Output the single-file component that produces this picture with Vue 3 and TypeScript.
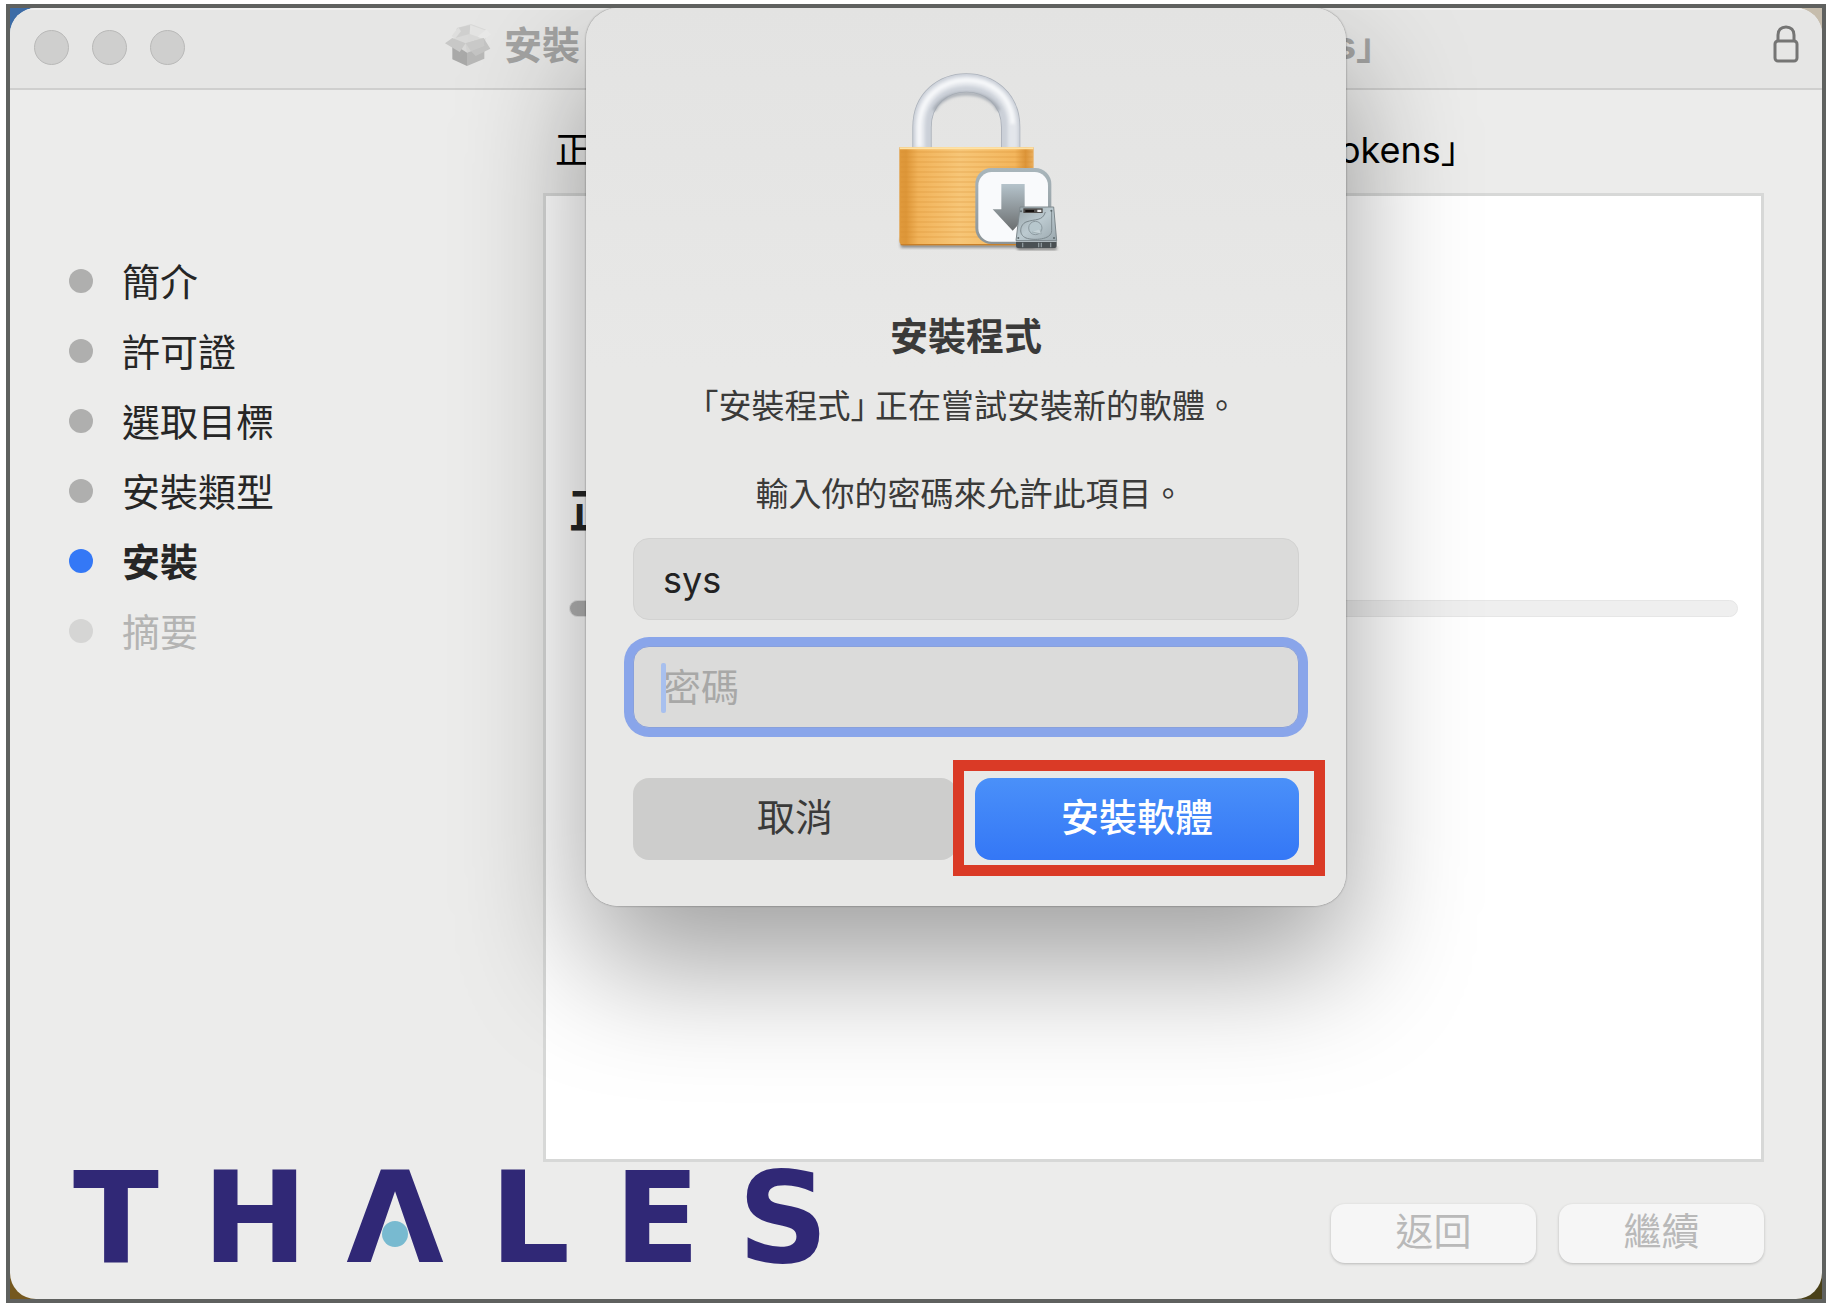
<script setup lang="ts">
import { ref } from 'vue'

type StepState = 'done' | 'current' | 'pending'
interface Step {
  label: string
  state: StepState
}

const steps: Step[] = [
  { label: '簡介', state: 'done' },
  { label: '許可證', state: 'done' },
  { label: '選取目標', state: 'done' },
  { label: '安裝類型', state: 'done' },
  { label: '安裝', state: 'current' },
  { label: '摘要', state: 'pending' },
]

const user = ref('sys')
const password = ref('')
const progress = ref(12)
// horizontal grain of the brass padlock body
const grain = Array.from({ length: 18 }, (_, i) => 306 + i * 15)
</script>

<template>
  <div class="desktop">
    <div class="window">
      <header class="titlebar">
        <div class="lights">
          <button type="button" aria-label="關閉"></button>
          <button type="button" aria-label="縮到最小"></button>
          <button type="button" aria-label="縮放"></button>
        </div>
        <div class="title">
          <svg class="box" viewBox="0 0 138 126" aria-hidden="true">
            <path d="M22 62 L66 80 L66 126 L22 106 Z" fill="#a9a9a8" />
            <path d="M66 80 L118 60 L118 104 L66 126 Z" fill="#b8b8b7" />
            <path d="M36 12 L78 0 L126 18 L118 66 L66 86 L22 58 Z" fill="#d9d9d8" />
            <path d="M36 12 L76 3 L74 30 L30 42 Z" fill="#cfcfce" />
            <path d="M76 3 L124 20 L116 44 L74 30 Z" fill="#e4e4e3" />
            <path d="M20 36 L40 10 L48 22 L30 44 Z" fill="#dededd" />
            <path d="M124 16 L138 32 L116 46 L98 38 Z" fill="#e9e9e8" />
            <path d="M22 42 L62 58 L44 84 L0 58 Z" fill="#c8c8c7" />
            <path d="M62 58 L116 42 L136 74 L92 96 L78 82 Z" fill="#c4c4c3" />
            <path d="M62 58 L116 42 L118 66 L66 86 Z" fill="#cececd" opacity=".6" />
          </svg>
          <span>安裝</span>
          <span class="tail">Tokens<span class="half">」</span></span>
        </div>
        <svg class="padlock" viewBox="0 0 26 38" fill="none" stroke="#757574" stroke-width="3" aria-hidden="true">
          <rect x="2" y="16" width="22" height="20" rx="3" />
          <path d="M5 16 V10 C5 5 8 2 13 2 C18 2 21 5 21 10 V16" />
        </svg>
      </header>

      <main class="body">
        <nav class="sidebar">
          <ol>
            <li v-for="s in steps" :key="s.label" :class="s.state">
              <i></i><span>{{ s.label }}</span>
            </li>
          </ol>
        </nav>
        <section class="content">
          <h1><span>正在安裝</span><span>Tokens<span class="half">」</span></span></h1>
          <div class="panel">
            <h2>正在</h2>
            <div class="track" role="progressbar" :aria-valuenow="progress">
              <div class="fill" :style="{ width: progress + '%' }"></div>
            </div>
          </div>
        </section>
      </main>

      <footer class="footer">
        <div class="brand">
          <span>T</span><span>H</span><span class="peak">Λ</span><span>L</span><span>E</span><span>S</span>
        </div>
        <div class="nav-buttons">
          <button type="button" disabled>返回</button>
          <button type="button" disabled>繼續</button>
        </div>
      </footer>

      <form class="dialog" role="dialog" aria-labelledby="dlg-title" @submit.prevent>
        <svg class="lock" viewBox="18 48 600 570" aria-hidden="true">
          <defs>
            <linearGradient id="brass" x1="0" x2="1" y1="0" y2="0">
              <stop offset="0" stop-color="#e09a3c" />
              <stop offset=".05" stop-color="#dd9638" />
              <stop offset=".14" stop-color="#f1b35a" />
              <stop offset=".45" stop-color="#f7c677" />
              <stop offset=".86" stop-color="#f3b65d" />
              <stop offset=".94" stop-color="#dc9438" />
              <stop offset="1" stop-color="#eab060" />
            </linearGradient>
            <linearGradient id="arrow" x1="0" x2="0" y1="0" y2="1">
              <stop offset="0" stop-color="#b5c3cb" />
              <stop offset="1" stop-color="#6b6e6f" />
            </linearGradient>
            <linearGradient id="tile" x1="0" x2="0" y1="0" y2="1">
              <stop offset="0" stop-color="#a9b6bc" />
              <stop offset="1" stop-color="#8c9497" />
            </linearGradient>
            <linearGradient id="disk" x1="0" x2="1" y1="0" y2="1">
              <stop offset="0" stop-color="#98a4a9" />
              <stop offset=".5" stop-color="#bccad0" />
              <stop offset="1" stop-color="#9aa7ad" />
            </linearGradient>
            <filter id="soft" x="-20%" y="-20%" width="140%" height="140%">
              <feGaussianBlur stdDeviation="5" />
            </filter>
          </defs>
          <rect x="122" y="565" width="400" height="28" fill="#000" opacity=".4" filter="url(#soft)" />
          <g fill="none">
            <path d="M186 296 V232 C186 54 452 54 452 232 V296" stroke="#a9afb8" stroke-width="58" />
            <path d="M186 296 V232 C186 54 452 54 452 232 V296" stroke="#cbd0d8" stroke-width="53" />
            <path d="M180 296 V228 C182 48 456 48 458 228 V296" stroke="#e3e6eb" stroke-width="30" filter="url(#soft)" />
            <path d="M178 290 V228 C184 46 454 46 458 222" stroke="#f8f9fb" stroke-width="12" filter="url(#soft)" />
            <path d="M222 182 C250 114 388 114 416 182" stroke="#a3a9b1" stroke-width="10" filter="url(#soft)" />
          </g>
          <path d="M118 292 H521 V586 H136 Q118 586 118 572 Z" fill="url(#brass)" />
          <path v-for="y in grain" :key="y" :d="`M122 ${y} H518`" stroke="#d58c30" stroke-width="3" opacity=".4" />
          <path d="M119 295 H520" stroke="#ffe3a6" stroke-width="6" />
          <path d="M122 584 H521" stroke="#c87f28" stroke-width="4" />
          <rect x="346" y="354" width="228" height="228" rx="48" fill="url(#tile)" />
          <rect x="355" y="366" width="209" height="209" rx="40" fill="#f9fafc" />
          <path d="M424 402 H494 V478 H518 L458 542 L398 478 H424 Z" fill="url(#arrow)" />
          <path d="M470 590 H590 V600 H474 Z" fill="#000" opacity=".45" filter="url(#soft)" />
          <path d="M480 471 H581 L590 572 H468 Z" fill="url(#disk)" stroke="#7e888c" stroke-width="3" />
          <path d="M468 572 H590 V588 Q590 594 584 594 H474 Q468 594 468 588 Z" fill="#4a5053" />
          <path d="M468 574 H590" stroke="#c4cfd4" stroke-width="3" />
          <path d="M488 578 V592 M536 578 V592 M544 578 V592 M572 578 V592" stroke="#8d979b" stroke-width="4" />
          <rect x="490" y="475" width="58" height="14" fill="#4d4a48" />
          <path d="M496 483 H522" stroke="#15110f" stroke-width="6" />
          <path d="M532 479 H544 V486 H532 Z" fill="#eee" />
          <path d="M575 480 V542 C575 570 520 572 498 564 C474 554 480 524 498 516 C526 506 548 514 556 486" fill="none" stroke="#7d898e" stroke-width="3" />
          <circle cx="526" cy="534" r="20" fill="#b7c7cd" stroke="#8c999f" stroke-width="3" />
          <path d="M516 546 L544 552 L540 538" fill="#c6d3d8" stroke="#94a1a6" stroke-width="2" />
          <g fill="#5d686c"><circle cx="483" cy="484" r="3" /><circle cx="574" cy="482" r="3" /><circle cx="475" cy="564" r="3" /><circle cx="582" cy="564" r="3" /></g>
        </svg>
        <h3 id="dlg-title">安裝程式</h3>
        <p><span class="half open">「</span>安裝程式<span class="half close">」</span>正在嘗試安裝新的軟體。</p>
        <p class="second">輸入你的密碼來允許此項目。</p>
        <input v-model="user" class="field" type="text" aria-label="使用者名稱" />
        <div class="password">
          <input v-model="password" class="field" type="password" placeholder="密碼" aria-label="密碼" />
          <i class="caret"></i>
        </div>
        <div class="actions">
          <button type="button" class="cancel">取消</button>
          <button type="submit" class="install">安裝軟體</button>
        </div>
      </form>
    </div>
  </div>
</template>

<style>
body {
  background: #fff;
}
</style>

<style scoped>
.desktop {
  display: flex;
  box-sizing: border-box;
  min-height: calc(100vh - 13px);
  margin: 4px 10px 9px 6px;
  border: 4px solid #5f615f;
  background:
    linear-gradient(90deg, #3d6ca6 0 50%, #c6bdad 50%) top / 100% 60px no-repeat,
    linear-gradient(90deg, #75581f 0 50%, #4a4119 50%);
  font-family: Inter, 'Noto Sans CJK TC', sans-serif;
  font-size: 38px;
  line-height: 48px;
  color: #262626;
}
.window {
  position: relative;
  flex: 1;
  display: flex;
  flex-direction: column;
  border-radius: 26px;
  background: #ececeb;
  overflow: hidden;
}
button,
input {
  font: inherit;
  margin: 0;
  border: 0;
}
.half {
  font-feature-settings: 'halt';
}

/* title bar */
.titlebar {
  display: grid;
  grid-template-columns: 24fr 51fr 25fr;
  align-items: center;
  height: 80px;
  border-bottom: 2px solid #cfcfce;
  background: #e6e6e5;
  box-shadow: inset 0 2px 0 #f1f1f0;
}
.lights {
  display: flex;
  gap: 23px;
  padding: 0 0 2px 24px;
}
.lights button {
  width: 35px;
  height: 35px;
  padding: 0;
  border: 1px solid #b8b8b7;
  border-radius: 50%;
  background: #cfcfce;
}
.title {
  display: flex;
  align-items: center;
  height: 74px;
  margin: 0 -6px 6px 0;
  font-weight: 700;
  color: #a3a3a2;
}
.box {
  width: 46px;
  height: 42px;
  margin-right: 13px;
}
.tail {
  margin-left: auto;
}
.padlock {
  width: 26px;
  height: 38px;
  margin: 0 23px 8px auto;
}

/* body */
.body {
  flex: 1;
  display: flex;
}
.sidebar {
  flex: none;
  width: 533px;
}
.sidebar ol {
  list-style: none;
  margin: 0;
  padding: 156px 0 0 59px;
}
.sidebar li {
  display: flex;
  align-items: center;
  gap: 29px;
  height: 70px;
}
.sidebar i {
  width: 24px;
  height: 24px;
  border-radius: 50%;
  background: #afafae;
}
.sidebar span {
  padding-top: 2px;
}
.current {
  font-weight: 700;
}
.sidebar .current i {
  background: #3478f6;
}
.pending {
  color: #b4b4b3;
}
.sidebar .pending i {
  background: #d5d5d4;
}
.content {
  flex: 1;
  display: flex;
  flex-direction: column;
  margin-right: 58px;
}
h1 {
  display: flex;
  justify-content: space-between;
  box-sizing: border-box;
  width: 75%;
  margin: 0;
  padding: 36px 0 19px 12px;
  font-size: 36px;
  font-weight: 400;
  color: #000;
}
.panel {
  flex: 1;
  padding: 284px 23px 0 23px;
  border: 3px solid #d7d8d7;
  background: #fff;
}
h2 {
  margin: 0 0 60px;
  font-size: 46px;
  line-height: 60px;
  font-weight: 700;
}
.track {
  height: 15px;
  border: 1px solid #e6e6e6;
  border-radius: 9px;
  background: #efefef;
  overflow: hidden;
}
.fill {
  height: 100%;
  background: #b4b4b4;
}

/* footer */
.footer {
  display: flex;
  justify-content: space-between;
  height: 137px;
}
.brand {
  display: grid;
  grid-template-columns: 138px 140px 140px 130px 124px 128px;
  justify-items: center;
  padding-left: 37px;
  font-family: 'DejaVu Sans', sans-serif;
  font-weight: 700;
  font-size: 126px;
  line-height: 114px;
  color: #302876;
}
.peak {
  position: relative;
}
.peak::after {
  content: '';
  position: absolute;
  left: calc(50% - 13px);
  top: 59px;
  width: 26px;
  height: 26px;
  border-radius: 50%;
  background: #78bad0;
}
.nav-buttons {
  display: flex;
  gap: 23px;
  padding: 42px 58px 0 0;
}
.nav-buttons button {
  width: 205px;
  height: 59px;
  padding: 0 0 6px;
  border-radius: 14px;
  background: #f6f6f6;
  box-shadow: 0 1px 3px rgba(0, 0, 0, 0.22);
  color: #b9b9b9;
}

/* password dialog */
.dialog {
  position: absolute;
  top: 0;
  left: calc(50% - 330px);
  box-sizing: border-box;
  width: 760px;
  padding: 58px 47px 46px;
  border-radius: 32px;
  background: linear-gradient(#e3e3e2, #e8e8e7 40%);
  box-shadow:
    0 0 2px rgba(0, 0, 0, 0.5),
    0 58px 126px rgba(0, 0, 0, 0.38);
  text-align: center;
  color: #3a3a39;
}
.lock {
  display: block;
  width: 200px;
  height: 190px;
  margin: 0 auto;
}
h3 {
  margin: 56px 0 24px;
  font-size: 38px;
  font-weight: 700;
}
p {
  margin: 0;
  font-size: 33px;
  line-height: 44px;
}
.second {
  margin: 44px 0 22px;
  padding-left: 8px;
}
.open {
  padding-left: 8px;
}
.close {
  padding-right: 8px;
}
.field {
  display: block;
  box-sizing: border-box;
  width: 100%;
  height: 82px;
  padding: 2px 30px 0 29px;
  border: 1px solid #d2d2d1;
  border-radius: 16px;
  background: #dbdbda;
  font-size: 36px;
  color: #222;
  outline: none;
}
.field::placeholder {
  font-size: 38px;
  color: #a8a8a7;
  opacity: 1;
}
.password {
  position: relative;
  margin: 26px 0 50px;
}
.password .field {
  border-color: #88a0dc;
  box-shadow: 0 0 0 9px #89a5ea;
}
.caret {
  position: absolute;
  left: 28px;
  top: 17px;
  width: 5px;
  height: 50px;
  border-radius: 2px;
  background: #a8c0ee;
}
.actions {
  display: flex;
  gap: 18px;
}
.actions button {
  flex: 1;
  height: 82px;
  padding: 0 0 4px;
  border-radius: 16px;
}
.cancel {
  background: #cdcdcc;
  color: #3a3a39;
}
.install {
  position: relative;
  background: linear-gradient(#4a90f9, #3477f6);
  color: #fff;
  font-weight: 500;
}
.install::after {
  content: '';
  position: absolute;
  inset: -18px -26px -16px -22px;
  border: 11px solid #da3a26;
}
</style>
